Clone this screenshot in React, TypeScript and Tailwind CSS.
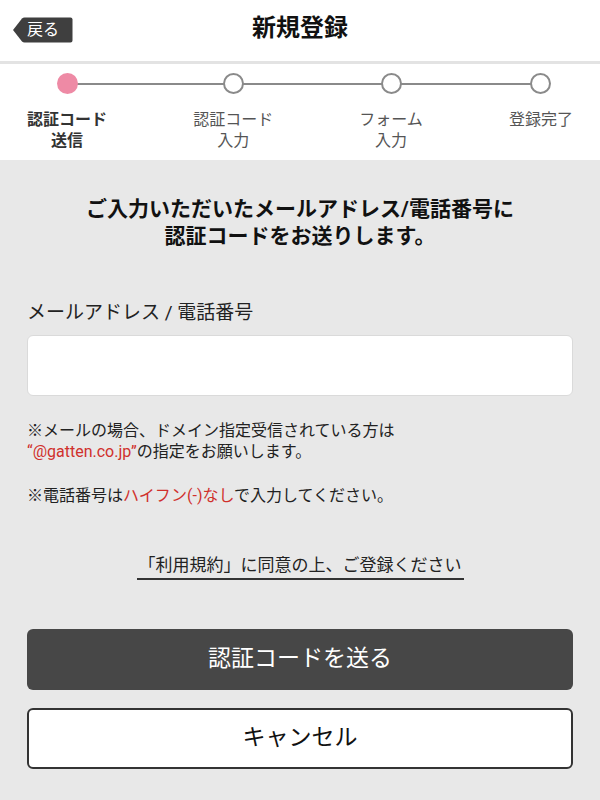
import React from "react";

const steps = [
  { l1: "認証コード", l2: "送信", active: true },
  { l1: "認証コード", l2: "入力", active: false },
  { l1: "フォーム", l2: "入力", active: false },
  { l1: "登録完了", l2: "", active: false },
];

export default function App() {
  return (
    <div
      className="w-[600px] min-h-[800px] bg-[#e8e8e8] text-[#222]"
      style={{ fontFamily: 'Roboto, "Noto Sans CJK JP", "Noto Sans", sans-serif' }}
    >
      {/* Header */}
      <div className="relative h-[64px] bg-white flex items-center justify-center border-b-[3px] border-[#e3e3e3]">
        <button className="absolute left-[13px] top-[17px] h-[26px] flex items-center">
          <svg width="60" height="26" viewBox="0 0 60 26" className="absolute left-0 top-0">
            <path d="M0 13 L9 1.5 Q10 0.5 11.5 0.5 L57.5 0.5 Q59.5 0.5 59.5 2.5 L59.5 23.5 Q59.5 25.5 57.5 25.5 L11.5 25.5 Q10 25.5 9 24.5 Z" fill="#3f3f3f" />
          </svg>
          <span className="relative pl-[14px] pr-[14px] text-white text-[16px] leading-[26px]">戻る</span>
        </button>
        <h1 className="text-[24px] font-bold leading-none text-[#111] mt-[-6px]">新規登録</h1>
      </div>

      {/* Stepper */}
      <div className="relative bg-white h-[96px] px-[27px] pt-[9px] flex justify-between">
        <div className="absolute left-[67px] right-[60px] top-[19px] h-[2px] bg-[#8a8a8a]" />
        {steps.map((s, i) => (
          <div key={i} className="relative flex flex-col items-center">
            <div
              className={
                s.active
                  ? "w-[21px] h-[21px] rounded-full bg-[#ee8aa5]"
                  : "w-[21px] h-[21px] rounded-full bg-white border-2 border-[#8a8a8a]"
              }
            />
            <div
              className={
                s.active
                  ? "mt-[15px] text-[16px] leading-[21px] font-bold text-[#333] text-center"
                  : "mt-[15px] text-[16px] leading-[21px] text-[#555] text-center"
              }
            >
              <div>{s.l1}</div>
              {s.l2 && <div>{s.l2}</div>}
            </div>
          </div>
        ))}
      </div>

      {/* Body */}
      <div className="px-[27px] pt-[36px]">
        <p className="text-center text-[21px] leading-[27px] font-bold text-[#111]">
          ご入力いただいたメールアドレス/電話番号に
          <br />
          認証コードをお送りします。
        </p>

        <label className="block mt-[51px] text-[19px] leading-[24px] text-[#222]">
          メールアドレス / 電話番号
        </label>
        <input
          type="text"
          className="mt-[10px] block w-full h-[61px] bg-white rounded-[6px] border border-[#dadada] outline-none px-3"
        />

        <div className="mt-[24px] text-[16px] leading-[21px] text-[#222]">
          <p>※メールの場合、ドメイン指定受信されている方は</p>
          <p>
            <span className="text-[#d0302c]">“@gatten.co.jp”</span>の指定をお願いします。
          </p>
          <p className="mt-[23px]">
            ※電話番号は<span className="text-[#d0302c]">ハイフン(-)なし</span>で入力してください。
          </p>
        </div>

        <div className="mt-[48px] flex justify-center">
          <a className="text-[17px] leading-[22px] text-[#222] border-b-2 border-[#333] pb-[2px] px-[2px]">
            「利用規約」に同意の上、ご登録ください
          </a>
        </div>

        <button className="mt-[49px] w-full h-[61px] rounded-[6px] bg-[#474747] text-white text-[23px] flex items-center justify-center">
          認証コードを送る
        </button>
        <button className="mt-[18px] w-full h-[61px] rounded-[6px] bg-white border-2 border-[#333] text-[#111] text-[23px] flex items-center justify-center">
          キャンセル
        </button>
      </div>
    </div>
  );
}
